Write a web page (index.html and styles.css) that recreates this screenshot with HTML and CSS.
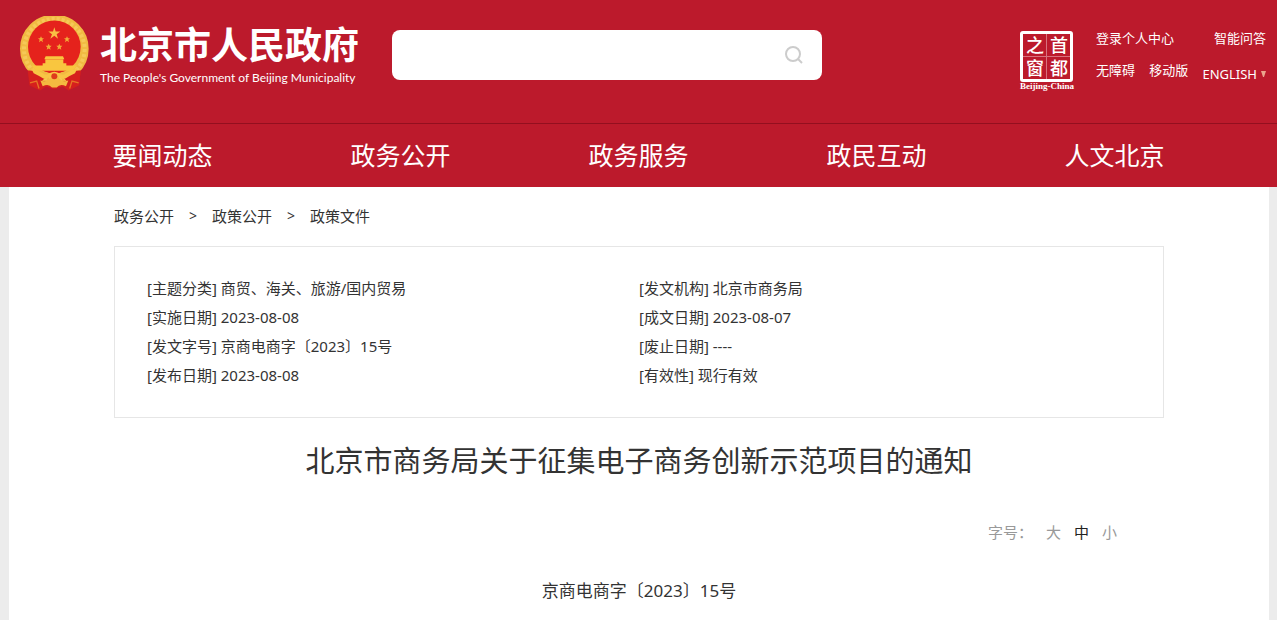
FILE: index.html
```
<!DOCTYPE html>
<html lang="zh-CN">
<head>
<meta charset="utf-8">
<meta name="viewport" content="width=device-width, initial-scale=1">
<title>北京市商务局关于征集电子商务创新示范项目的通知</title>
<link rel="stylesheet" href="styles.css">
</head>
<body>
<header class="site-header">
  <div class="masthead">
    <a class="brand" href="#">
      <svg class="emblem" viewBox="9 8 213 225" aria-hidden="true">
        <path d="M36 168L40 214L72 230L90 218L115 226L140 218L158 230L190 214L194 168Z" fill="#d3201f"/>
        <circle cx="115" cy="105" r="88" fill="none" stroke="#f1ba42" stroke-width="30"/>
        <circle cx="115" cy="106" r="91" fill="none" stroke="#fad268" stroke-width="12" stroke-dasharray="9 6" opacity=".6"/>
        <circle cx="115" cy="99" r="79" fill="#e5221c"/>
        <path d="M115 40L119 53L133 53L122 61L126 75L115 66L103 75L108 61L97 53L111 53Z" fill="#f9c044"/>
        <g fill="#f2ab38">
          <path id="small-star" d="M75 67L78 73L84 73L79 78L81 85L75 81L69 85L71 78L66 73L72 73Z"/>
          <use href="#small-star" x="78"/>
          <use href="#small-star" x="23" y="23"/>
          <use href="#small-star" x="55" y="23"/>
        </g>
        <path d="M89 127H141L145 136H85ZM88 137H142V148H88ZM80 148H151V155H183Q178 164 168 171H62Q52 164 47 155H80Z" fill="#f9c63f"/>
        <path d="M35 170Q58 168 72 181L89 190L74 205L64 224L42 212ZM195 170Q172 168 158 181L141 190L156 205L166 224L188 212Z" fill="#d61f1d"/>
        <path d="M46 164Q65 168 80 178Q91 187 100 178Q115 169 130 178Q139 187 150 178Q165 168 184 164L177 178Q160 186 148 194Q139 198 130 190Q115 184 100 190Q91 198 82 194Q70 186 53 178Z" fill="#f8c545"/>
        <path d="M73 200L89 204L101 193L115 187L129 193L141 204L157 200L150 217Q132 208 122 221H108Q98 208 80 217Z" fill="#f4ba40"/>
        <circle cx="115" cy="187" r="9" fill="#df3b1c"/>
        <path d="M42 207L62 202L69 224M188 207L168 202L161 224" fill="none" stroke="#e77425" stroke-width="4"/>
      </svg>
      <span class="brand-text">
        <span class="brand-name">北京市人民政府</span>
        <span class="brand-sub">The People's Government of Beijing Municipality</span>
      </span>
    </a>
    <form class="search" role="search">
      <input class="search-input" type="text" aria-label="搜索">
      <button class="search-button" type="button" aria-label="搜索">
        <svg class="search-icon" viewBox="0 0 20 20" aria-hidden="true"><circle cx="9" cy="9" r="7"/><path d="M14 14L18 18"/></svg>
      </button>
    </form>
    <div class="tools">
      <a class="seal" href="#">
        <span class="seal-grid"><span>之</span><span>首</span><span>窗</span><span>都</span></span>
        <span class="seal-caption">Beijing-China</span>
      </a>
      <div class="tool-links">
        <div class="tool-row"><a href="#">登录个人中心</a><a href="#">智能问答</a></div>
        <div class="tool-row"><a href="#">无障碍</a><a href="#">移动版</a><button class="language" type="button">ENGLISH<svg class="caret" viewBox="0 0 5 6" aria-hidden="true"><path d="M0 0H5L3 6H2Z"/></svg></button></div>
      </div>
    </div>
  </div>
  <nav class="main-nav">
    <div class="nav-list">
      <a href="#">要闻动态</a><a href="#">政务公开</a><a href="#">政务服务</a><a href="#">政民互动</a><a href="#">人文北京</a>
    </div>
  </nav>
</header>
<main class="page">
  <div class="content">
    <nav class="breadcrumb" aria-label="当前位置"><a href="#">政务公开</a><span>&gt;</span><a href="#">政策公开</a><span>&gt;</span><a href="#">政策文件</a></nav>
    <section class="details">
      <ul class="detail-list">
        <li>[主题分类] 商贸、海关、旅游/国内贸易</li>
        <li>[实施日期] 2023-08-08</li>
        <li>[发文字号] 京商电商字〔2023〕15号</li>
        <li>[发布日期] 2023-08-08</li>
      </ul>
      <ul class="detail-list">
        <li>[发文机构] 北京市商务局</li>
        <li>[成文日期] 2023-08-07</li>
        <li>[废止日期] ----</li>
        <li>[有效性] 现行有效</li>
      </ul>
    </section>
    <h1 class="title">北京市商务局关于征集电子商务创新示范项目的通知</h1>
    <div class="font-size" role="group" aria-label="字号">
      <span class="font-size-label">字号：</span>
      <button type="button">大</button>
      <button type="button" class="active" aria-pressed="true">中</button>
      <button type="button">小</button>
    </div>
    <p class="doc-number">京商电商字〔2023〕15号</p>
  </div>
</main>
</body>
</html>
```
FILE: styles.css
```
* { box-sizing: border-box; }
body {
  margin: 0;
  min-height: 100vh;
  display: flex;
  flex-direction: column;
  background: #ececec;
  color: #333;
  font-family: "Noto Sans", "Noto Sans CJK SC", sans-serif;
  font-size: 15px;
}
a { color: inherit; text-decoration: none; }
button {
  padding: 0;
  border: 0;
  background: none;
  color: inherit;
  font: inherit;
  cursor: pointer;
}
ul { margin: 0; padding: 0; list-style: none; }

.site-header { background: #bc1a2c; color: #fff; }
.masthead {
  display: flex;
  align-items: flex-start;
  min-height: 123px;
  padding: 16px 11px 0 19px;
}
.brand { display: flex; gap: 10px; width: 373px; flex: none; }
.emblem { width: 71px; height: 76px; }
.brand-text { display: flex; flex-direction: column; padding-top: 7px; white-space: nowrap; }
.brand-name { font-size: 37px; font-weight: 700; line-height: 44px; }
.brand-sub { font-family: Lato, sans-serif; font-size: 12px; line-height: 22px; }

.search {
  display: flex;
  align-items: center;
  flex: 0 1 430px;
  height: 50px;
  margin-top: 14px;
  padding-right: 18px;
  background: #fff;
  border-radius: 8px;
}
.search-input {
  flex: 1;
  min-width: 0;
  height: 100%;
  padding: 0 16px;
  border: 0;
  outline: 0;
  background: transparent;
  font: inherit;
}
.search-button { display: flex; }
.search-icon { width: 20px; height: 20px; fill: none; stroke: #ccc; stroke-width: 2; }

.tools { display: flex; gap: 22px; margin-left: auto; }
.seal { display: flex; flex-direction: column; align-items: center; padding-top: 15px; }
.seal-grid {
  display: grid;
  grid-template-columns: 1fr 1fr;
  gap: 1px;
  border: 3px solid #fff;
  border-radius: 3px;
  background: #d8717d;
  font-size: 18px;
  font-weight: 500;
  line-height: 22px;
  text-align: center;
}
.seal-grid span { width: 23px; height: 22px; background: #bc1a2c; }
.seal-caption { font-family: "Liberation Serif", serif; font-size: 9px; font-weight: 700; line-height: 9px; }
.tool-links { width: 170px; padding-top: 12px; font-size: 13px; line-height: 20px; }
.tool-row { display: flex; justify-content: space-between; margin-bottom: 12px; }
.language { display: flex; align-items: center; gap: 4px; padding-top: 4px; line-height: 20px; }
.caret { width: 5px; height: 6px; fill: #eba58d; }

.main-nav { border-top: 1px solid #930f1f; }
.nav-list {
  display: flex;
  justify-content: space-between;
  max-width: 1052px;
  margin: 0 auto;
  font-size: 25px;
  line-height: 63px;
}

.page { flex: 1; margin: 0 8px 0 9px; background: #fff; }
.content { max-width: 1050px; margin: 0 auto; }
.breadcrumb { display: flex; gap: 15px; padding: 19px 0 20px; line-height: 20px; }
.breadcrumb span { font-size: 14px; }
.details {
  display: grid;
  grid-template-columns: 1fr 1fr;
  padding: 27px 32px;
  border: 1px solid #e6e6e6;
  line-height: 29px;
}
.title {
  margin: 21px 0 0;
  font-size: 29px;
  font-weight: 400;
  line-height: 44px;
  text-align: center;
}
.font-size {
  display: flex;
  justify-content: flex-end;
  gap: 13px;
  margin-top: 39px;
  padding-right: 47px;
  color: #999;
  line-height: 20px;
}
.font-size .active { color: #222; }
.doc-number { margin: 37px 0 0; font-size: 17px; line-height: 24px; text-align: center; }
```
